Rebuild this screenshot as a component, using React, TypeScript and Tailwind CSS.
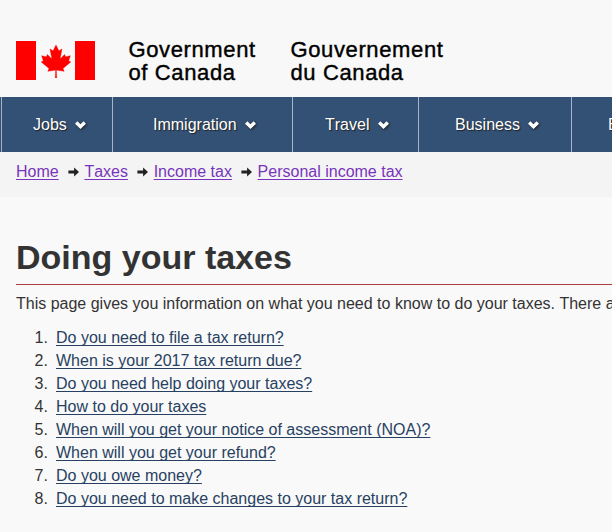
const LEAF =
  'm-90 2030 45-863a95 95 0 0 0-111-98l-859 151 116-320a65 65 0 0 0-20-73l-941-762 212-99a65 65 0 0 0 34-79l-186-572 542 115a65 65 0 0 0 73-38l105-247 423 454a65 65 0 0 0 111-57l-204-1052 327 189a65 65 0 0 0 91-27l332-652 332 652a65 65 0 0 0 91 27l327-189-204 1052a65 65 0 0 0 111 57l423-454 105 247a65 65 0 0 0 73 38l542-115-186 572a65 65 0 0 0 34 79l212 99-941 762a65 65 0 0 0-20 73l116 320-859-151a95 95 0 0 0-111 98l45 863z';

function Flag() {
  return (
    <div className="mt-[41px] flex h-[40px] w-[79px] items-start justify-between">
      <div className="h-[39px] w-[20px] bg-[#ff0000]" />
      <svg className="mt-[4px] h-[33px] w-[32px]" viewBox="-2015 -2000 4030 4030" preserveAspectRatio="none">
        <path d={LEAF} fill="#ff0000" stroke="#ff0000" strokeWidth="50" />
      </svg>
      <div className="h-[39px] w-[20px] bg-[#ff0000]" />
    </div>
  );
}

function Chevron() {
  return (
    <svg className="mt-[1px] ml-[8.5px] h-[8px] w-[11px] shrink-0 overflow-visible drop-shadow-[1px_1px_1px_#222222]" viewBox="0 0 11 8">
      <path d="M0 2.7 2.4.3 5.5 3.2 8.6.3 11 2.7 5.5 8z" fill="#ffffff" />
    </svg>
  );
}

function Arrow() {
  return (
    <svg className="mt-[1px] mr-[5.5px] ml-[9px] h-[10px] w-[11.2px] shrink-0" viewBox="0 0 11 10">
      <path d="M.3 3.5h5.7V.6L11 5 6 9.4V6.5H.3z" fill="#222222" />
    </svg>
  );
}

const menu = [
  { label: 'Jobs', box: 'w-[111px] pl-[31px]' },
  { label: 'Immigration', box: 'w-[180px] pl-[40px]' },
  { label: 'Travel', box: 'w-[126px] pl-[32px]' },
  { label: 'Business', box: 'w-[153px] pl-[36px]' },
  { label: 'Benefits', box: 'w-[150px] pl-[36px]' },
];

const crumbs = ['Home', 'Taxes', 'Income tax', 'Personal income tax'];

const questions = [
  'Do you need to file a tax return?',
  'When is your 2017 tax return due?',
  'Do you need help doing your taxes?',
  'How to do your taxes',
  'When will you get your notice of assessment (NOA)?',
  'When will you get your refund?',
  'Do you owe money?',
  'Do you need to make changes to your tax return?',
];

const wordmark =
  'mt-[38px] whitespace-nowrap text-[22px] leading-[23px] tracking-[0.62px] text-black [-webkit-text-stroke:0.4px_black]';
const link = 'underline decoration-1 underline-offset-[2px] [text-decoration-skip-ink:none]';

export default function App() {
  return (
    <div className="h-[532px] w-[612px] overflow-hidden bg-[#f9f9f9] font-['Liberation_Sans',Arial,sans-serif] text-base text-[#333333] [font-kerning:none]">
      <header className="flex h-[97px] bg-[#f8f8f8] pl-[16px]">
        <Flag />
        <div className={`${wordmark} ml-[33.5px] w-[162px]`}>
          Government
          <br />
          of Canada
        </div>
        <div className={wordmark}>
          Gouvernement
          <br />
          du Canada
        </div>
      </header>
      <nav className="flex h-[55px] overflow-hidden bg-[#335075] pl-[1px]">
        {menu.map((m) => (
          <div key={m.label} className={`${m.box} flex shrink-0 items-center border-l border-[#a6b5cc] text-white [text-shadow:1px_1px_1px_#222]`}>
            {m.label}
            <Chevron />
          </div>
        ))}
      </nav>
      <div className="flex h-[45px] items-start bg-[#f4f4f4] pt-[8px] pl-[16px] leading-[23px]">
        {crumbs.map((c, i) => (
          <div key={c} className="flex items-center">
            {i > 0 && <Arrow />}
            <a className={`${link} text-[#7834bc]`}>{c}</a>
          </div>
        ))}
      </div>
      <main className="pl-[16px]">
        <h1 className="h-[88px] border-b border-[#af3c43] pt-[40px] text-[34px] leading-[40px] font-bold">Doing your taxes</h1>
        <p className="mt-[7px] text-base leading-[23px] whitespace-nowrap">
          This page gives you information on what you need to know to do your taxes. There are
        </p>
        <ol className="mt-[11px] pl-[18.5px] leading-[23px]">
          {questions.map((q, i) => (
            <li key={q} className="flex">
              <span className="w-[21.5px]">{i + 1}.</span>
              <a className={`${link} text-[#284162]`}>{q}</a>
            </li>
          ))}
        </ol>
      </main>
    </div>
  );
}
